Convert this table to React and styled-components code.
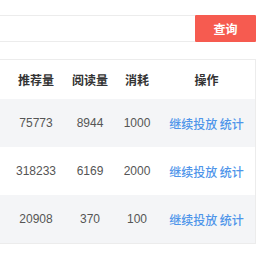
import React from "react";
import styled, { createGlobalStyle } from "styled-components";

const Global = createGlobalStyle`
  html, body { margin: 0; padding: 0; background: #fff; }
  body { font-family: "Liberation Sans", "Noto Sans CJK SC", sans-serif; }
`;

const Page = styled.div`
  width: 274px;
  height: 253px;
  padding-top: 15px;
  box-sizing: border-box;
  overflow: hidden;
`;

const SearchBar = styled.div`
  display: flex;
  width: 256px;
  height: 27px;
`;

const Input = styled.div`
  flex: 1;
  box-sizing: border-box;
  border: 1px solid #ececec;
  border-left: none;
  border-right: none;
  background: #fff;
`;

const Button = styled.button`
  width: 61px;
  height: 27px;
  border: none;
  margin: 0;
  padding: 0;
  background: #f65b50;
  color: #fff;
  font-family: "Noto Sans CJK SC", sans-serif;
  font-size: 12px;
  font-weight: 700;
  border-radius: 1px;
`;

const Table = styled.div`
  margin-top: 17px;
  width: 256px;
  box-sizing: border-box;
  border-top: 1px solid #ececec;
  border-right: 1px solid #ececec;
  border-bottom: 1px solid #ececec;
`;

const Row = styled.div`
  display: grid;
  grid-template-columns: 8px 56px 52px 42px 97px;
  height: ${(p) => (p.$header ? "39px" : "48px")};
  align-items: center;
  background: ${(p) => (p.$striped ? "#f4f5f7" : "#fff")};
`;

const Cell = styled.div`
  text-align: center;
  white-space: nowrap;
  font-size: 12px;
  color: ${(p) => (p.$header ? "#333" : "#555")};
  font-weight: ${(p) => (p.$header ? 700 : 400)};
  font-family: ${(p) =>
    p.$header ? '"Noto Sans CJK SC", sans-serif' : '"Liberation Sans", "Noto Sans CJK SC", sans-serif'};
`;

const Action = styled.span`
  color: #4f95ea;
  font-family: "Noto Sans CJK SC", sans-serif;
  font-size: 12px;
  font-weight: 500;
`;

const rows = [
  ["75773", "8944", "1000"],
  ["318233", "6169", "2000"],
  ["20908", "370", "100"],
];

export default function App() {
  return (
    <>
      <Global />
      <Page>
        <SearchBar>
          <Input />
          <Button>查询</Button>
        </SearchBar>
        <Table>
          <Row $header>
            <Cell />
            <Cell $header>推荐量</Cell>
            <Cell $header>阅读量</Cell>
            <Cell $header>消耗</Cell>
            <Cell $header>操作</Cell>
          </Row>
          {rows.map((r, i) => (
            <Row key={i} $striped={i % 2 === 0}>
              <Cell />
              <Cell>{r[0]}</Cell>
              <Cell>{r[1]}</Cell>
              <Cell>{r[2]}</Cell>
              <Cell>
                <Action>继续投放 统计</Action>
              </Cell>
            </Row>
          ))}
        </Table>
      </Page>
    </>
  );
}
